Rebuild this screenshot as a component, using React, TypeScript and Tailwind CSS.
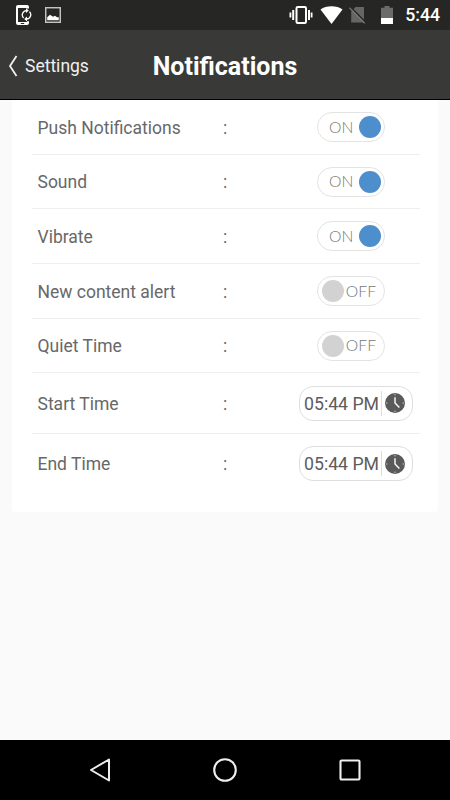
type Row = { label: string; height: string; on?: boolean; time?: string }

const rows: Row[] = [
  { label: 'Push Notifications', height: 'h-[55px]', on: true },
  { label: 'Sound', height: 'h-[54px]', on: true },
  { label: 'Vibrate', height: 'h-[55px]', on: true },
  { label: 'New content alert', height: 'h-[55px]', on: false },
  { label: 'Quiet Time', height: 'h-[54px]', on: false },
  { label: 'Start Time', height: 'h-[61px]', time: '05:44 PM' },
  { label: 'End Time', height: 'h-[60px]', time: '05:44 PM' },
]

export default function App() {
  return (
    <div className="flex h-[800px] w-[450px] flex-col overflow-hidden bg-[#fafafa] font-['Roboto',sans-serif]">
      <StatusBar />
      <header className="grid h-[70px] shrink-0 grid-cols-[1fr_auto_1fr] items-center border-b border-black bg-[#393a37] text-white">
        <button className="flex items-center gap-[7px] pl-2 pt-[2px] text-[17.5px] text-[#f0f0f0]">
          <svg className="h-[22px] w-[10px]" viewBox="0 0 10 22" fill="none" stroke="currentColor" strokeWidth="1.8">
            <path d="M8.5 1 2 11l6.5 10" />
          </svg>
          <span className="pt-[2px]">Settings</span>
        </button>
        <h1 className="pt-1 text-[25px] font-bold">Notifications</h1>
      </header>
      <main className="mx-3 h-[412px] rounded-b-sm bg-white pl-5 pr-[18px]">
        {rows.map((row) => (
          <SettingRow key={row.label} {...row} />
        ))}
      </main>
      <NavBar />
    </div>
  )
}

function SettingRow({ label, height, on, time }: Row) {
  return (
    <div
      className={`flex items-center border-b border-[#eeeeee] pl-[5.5px] text-[17.5px] text-[#686868] last:border-transparent ${height}`}
    >
      <span className="w-[185.5px] whitespace-nowrap pt-[2px]">{label}</span>
      <span className="pt-[2px]">:</span>
      <div className={time ? 'ml-auto mr-[7px]' : 'ml-auto mr-[35px]'}>
        {time ? <TimeField value={time} /> : <Toggle on={!!on} />}
      </div>
    </div>
  )
}

function Toggle({ on }: { on: boolean }) {
  return (
    <button
      className={`flex h-[30px] w-[68px] items-center justify-between rounded-full border border-[#e3e3e3] font-['Lato',sans-serif] text-[15.7px] font-light text-[#777777] ${
        on ? 'pl-[11px] pr-[3px]' : 'flex-row-reverse pl-[3.5px] pr-2'
      }`}
    >
      <span className="pt-px">{on ? 'ON' : 'OFF'}</span>
      <span className={`h-[22px] w-[22px] rounded-full ${on ? 'bg-[#4d8fcc]' : 'bg-[#d2d2d2]'}`} />
    </button>
  )
}

function TimeField({ value }: { value: string }) {
  return (
    <div className="flex h-[35px] w-[114px] items-center rounded-[14px] border border-[#dedede] pl-1 text-[17.7px] text-[#5c5c5c]">
      <span className="w-[77px] whitespace-nowrap pt-[2px]">{value}</span>
      <span className="h-[25px] w-px bg-[#dddddd]" />
      <svg className="ml-[3px] h-5 w-5" viewBox="0 0 20 20" fill="none">
        <circle cx="10" cy="10" r="10" fill="#5a5a5a" />
        <path d="M10 4.2V10l4.4 4.4" stroke="white" strokeWidth="1.4" />
        <path d="M10 1v1.4M10 17.6V19M1 10h1.4M17.6 10H19" stroke="#cccccc" strokeWidth="1" />
      </svg>
    </div>
  )
}

function StatusBar() {
  return (
    <div className="flex h-[30px] shrink-0 items-center bg-[#262724] text-white">
      <svg className="ml-4 h-5 w-4" viewBox="0 0 16 20" fill="none">
        <path
          d="M13 3.6V2Q13 0 11 0H2Q0 0 0 2v16q0 2 2 2h9q2 0 2-2v-1.8h-2V17H2V3h8.5v.6z"
          fill="white"
        />
        <path d="M4.8 18.5h3.4" stroke="#262724" strokeWidth="1" />
        <path d="M7.6 13A4.3 4.3 0 0 1 10.3 5.6M13.4 6.6A4.3 4.3 0 0 1 10.7 14" stroke="white" strokeWidth="1.3" />
        <path d="m10 3.2 2.8 2.4L10 8zM11 11.6 8.2 14l2.8 2.4z" fill="white" />
      </svg>
      <svg className="ml-[13px] h-4 w-4" viewBox="0 0 16 16" fill="none">
        <rect x=".7" y=".7" width="14.6" height="14.6" stroke="#c4c4c0" strokeWidth="1.5" />
        <path d="M2.2 13.2V10.2l2.8-2.4L8 9.8l2-1 2 1.4h1.8v3z" fill="white" />
      </svg>
      <div className="ml-auto flex items-center">
        <svg className="h-[18px] w-6" viewBox="0 0 24 18" fill="none" stroke="white">
          <rect x="7.5" y="1" width="9.5" height="16" rx="1.2" strokeWidth="2" />
          <path d="M4.2 4v10M20 4v10" strokeWidth="2" />
          <path d="M1.4 6.5v5M22.6 6.5v5" strokeWidth="1.8" />
        </svg>
        <svg className="ml-[7px] h-[18px] w-[23px]" viewBox="0 0 23 18" fill="white">
          <path d="M.5 3.5Q5 .2 11.5.2T22.5 3.5L11.5 18z" />
        </svg>
        <svg className="ml-[6px] h-[18px] w-[17px]" viewBox="0 0 17 18" fill="none">
          <path d="M6.5 1H15v15.5H2.2V5.2z" fill="#666764" />
          <path d="M1.6 1 16.8 16.4" stroke="#262724" strokeWidth="1.4" />
          <path d="M.4 1.8 15.8 17.4" stroke="#777875" strokeWidth="1.3" />
        </svg>
        <svg className="ml-[15px] h-[18px] w-3" viewBox="0 0 12 18">
          <path d="M0 1.8h3.5V0h5v1.8H12V18H0z" fill="#6b6c69" />
          <path d="M0 12h12v6H0z" fill="white" />
        </svg>
        <span className="ml-3 mr-[10px] pt-[2px] text-[17.7px] font-medium leading-none">5:44</span>
      </div>
    </div>
  )
}

function NavBar() {
  return (
    <nav className="mt-auto flex h-[60px] shrink-0 items-center justify-between bg-black px-[88px]">
      <svg className="h-6 w-6" viewBox="0 0 24 24" fill="none" stroke="#eeeeee" strokeWidth="2" strokeLinejoin="round">
        <path d="M3 12 21 1.5v21z" />
      </svg>
      <svg className="h-6 w-6" viewBox="0 0 24 24" fill="none" stroke="#eeeeee" strokeWidth="2.1">
        <circle cx="12" cy="12" r="10.8" />
      </svg>
      <svg className="h-6 w-6" viewBox="0 0 24 24" fill="none" stroke="#eeeeee" strokeWidth="2.1">
        <rect x="2.5" y="2.5" width="19" height="19" rx="1" />
      </svg>
    </nav>
  )
}
